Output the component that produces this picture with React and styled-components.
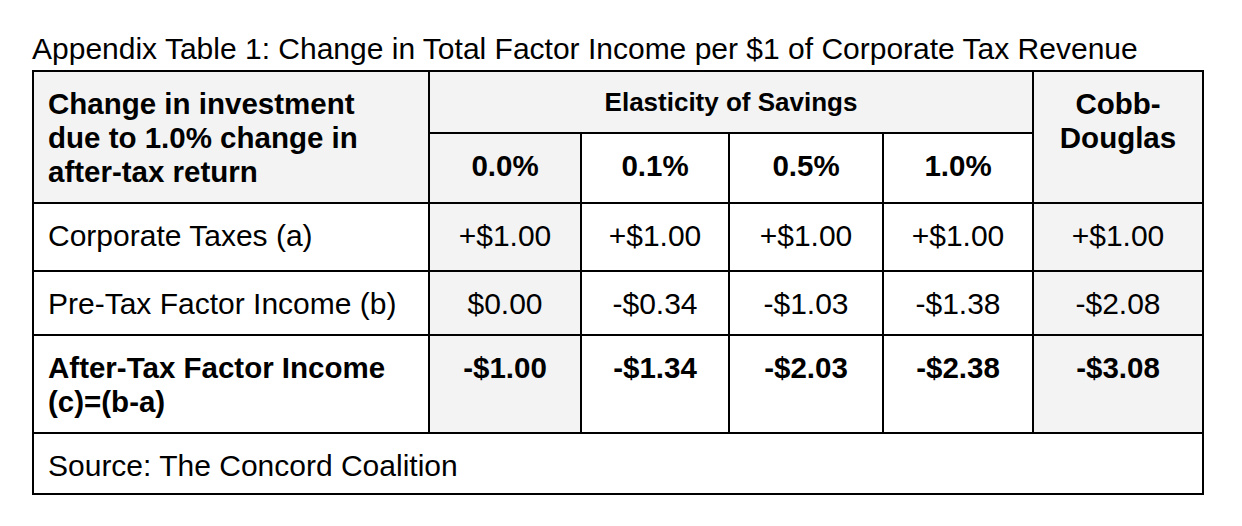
import React from 'react';
import styled, { createGlobalStyle } from 'styled-components';

// --- Data ---
const percents = ['0.0%', '0.1%', '0.5%', '1.0%'];

const rows = [
  { label: 'Corporate Taxes (a)', values: ['+$1.00', '+$1.00', '+$1.00', '+$1.00'], cobb: '+$1.00' },
  { label: 'Pre-Tax Factor Income (b)', values: ['$0.00', '-$0.34', '-$1.03', '-$1.38'], cobb: '-$2.08' },
  { label: 'After-Tax Factor Income (c)=(b-a)', values: ['-$1.00', '-$1.34', '-$2.03', '-$2.38'], cobb: '-$3.08', bold: true },
];

// --- Styles ---
const GlobalStyle = createGlobalStyle`
  html, body {
    margin: 0;
    padding: 0;
    background: #ffffff;
  }
  body {
    font-family: 'Liberation Sans', Arial, Helvetica, sans-serif;
    color: #000;
  }
`;

const Page = styled.div`
  padding: 32px 0 0 32px;
`;

const Title = styled.div`
  font-size: 30px;
  line-height: 34px;
  margin-bottom: 4px;
  white-space: nowrap;
`;

const Grid = styled.div`
  display: grid;
  width: fit-content;
  grid-template-columns: 394px 150px 146px 152px 148px 168px;
  grid-template-rows: 60px 68px 66px 62px 96px 59px;
  gap: 2px;
  border: 2px solid #000;
  background: #000;
`;

const Cell = styled.div`
  background: ${p => (p.$shaded ? '#f3f3f3' : '#ffffff')};
  font-size: ${p => (p.$small ? '26px' : p.$bold ? '29.5px' : '30px')};
  line-height: ${p => (p.$small ? '30px' : '34px')};
  font-weight: ${p => (p.$bold ? 'bold' : 'normal')};
  text-align: ${p => (p.$center ? 'center' : 'left')};
  padding: 15px 14px 0;
  grid-column: ${p => p.$col || 'auto'};
  grid-row: ${p => p.$row || 'auto'};
`;

// --- Component ---
const App = () => (
  <>
    <GlobalStyle />
    <Page>
      <Title>Appendix Table 1: Change in Total Factor Income per $1 of Corporate Tax Revenue</Title>
      <Grid>
        <Cell $shaded $bold $col="1" $row="1 / span 2">
          Change in investment
          <br />
          due to 1.0% change in
          <br />
          after-tax return
        </Cell>
        <Cell $shaded $bold $small $center $col="2 / span 4" $row="1">
          Elasticity of Savings
        </Cell>
        <Cell $shaded $bold $center $col="6" $row="1 / span 2">
          Cobb-
          <br />
          Douglas
        </Cell>
        {percents.map((p, i) => (
          <Cell key={p} $shaded={i === 0} $bold $center>
            {p}
          </Cell>
        ))}

        {rows.map(row => (
          <React.Fragment key={row.label}>
            <Cell $bold={row.bold}>{row.label}</Cell>
            {row.values.map((v, i) => (
              <Cell key={i} $shaded={i === 0} $bold={row.bold} $center>
                {v}
              </Cell>
            ))}
            <Cell $shaded $bold={row.bold} $center>
              {row.cobb}
            </Cell>
          </React.Fragment>
        ))}

        <Cell $col="1 / -1">Source: The Concord Coalition</Cell>
      </Grid>
    </Page>
  </>
);

export default App;
